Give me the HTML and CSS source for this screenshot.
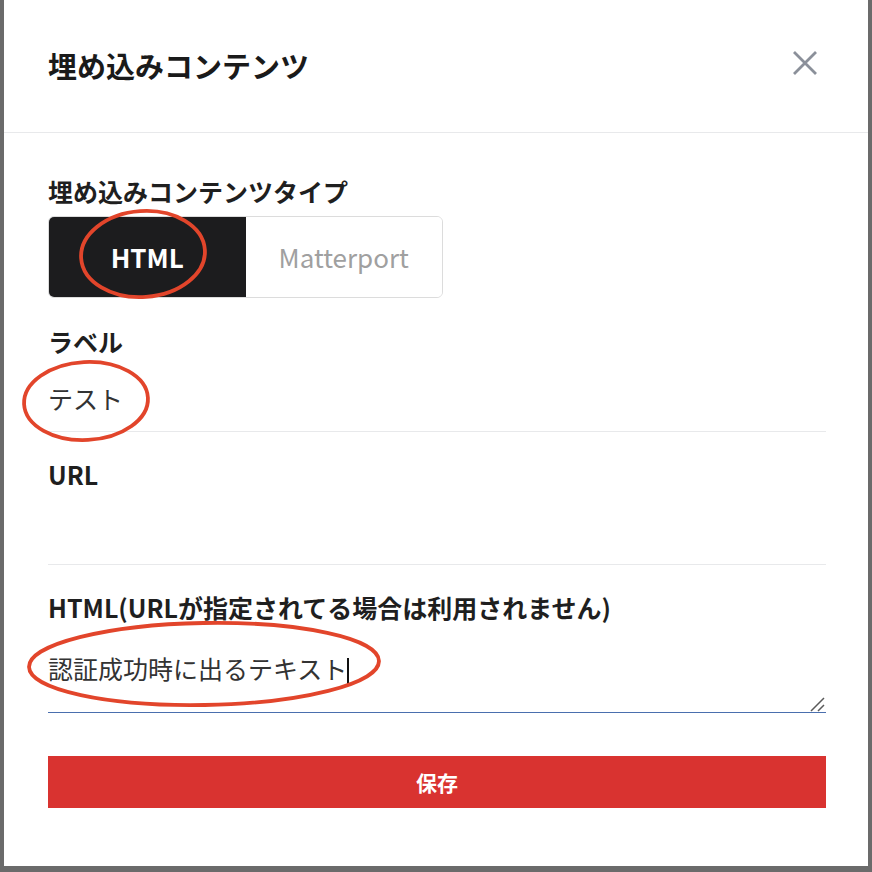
FILE: index.html
```html
<!DOCTYPE html>
<html lang="ja">
<head>
<meta charset="utf-8">
<title>埋め込みコンテンツ</title>
<link rel="stylesheet" href="styles.css">
</head>
<body>
<div class="modal">
  <header class="modal-header">
    <h1 class="modal-title">埋め込みコンテンツ</h1>
    <button class="close-btn" aria-label="閉じる">
      <svg width="26" height="26" viewBox="0 0 26 26"><path d="M2 2 L24 24 M24 2 L2 24" stroke="#8b909a" stroke-width="2.8" stroke-linecap="butt" fill="none"/></svg>
    </button>
  </header>
  <div class="modal-body">
    <div class="field field-first">
      <div class="label">埋め込みコンテンツタイプ</div>
      <div class="toggle">
        <div class="seg seg-on">HTML</div>
        <div class="seg seg-off">Matterport</div>
      </div>
    </div>
    <div class="field field-after-toggle">
      <div class="label">ラベル</div>
      <input class="text-input" type="text" value="テスト">
    </div>
    <div class="field">
      <div class="label">URL</div>
      <input class="text-input" type="text" value="">
    </div>
    <div class="field">
      <div class="label">HTML(URLが指定されてる場合は利用されません)</div>
      <div class="ta-wrap">
        <textarea class="text-area">認証成功時に出るテキスト</textarea>
        <div class="ta-mirror" aria-hidden="true"><span class="ghost">認証成功時に出るテキスト</span><span class="caret"></span></div>
        <svg class="grip" width="16" height="16" viewBox="0 0 16 16" aria-hidden="true"><path d="M2 15 L15 2 M9 15 L15 9" stroke="#5a5a5a" stroke-width="1.5" fill="none"/></svg>
      </div>
    </div>
    <button class="save-btn">保存</button>
  </div>
  <svg class="marks" width="864" height="866" viewBox="0 0 864 866" aria-hidden="true">
    <ellipse cx="139" cy="254" rx="62" ry="43" transform="rotate(-4 139 254)"/>
    <ellipse cx="82" cy="401" rx="62" ry="39" transform="rotate(-3 82 401)"/>
    <ellipse cx="200" cy="664" rx="175" ry="41" transform="rotate(-1 200 664)"/>
  </svg>
</div>
</body>
</html>
```
FILE: styles.css
```css
* { box-sizing: border-box; }
html, body { margin: 0; padding: 0; }
body {
  background: #6b6b6b;
  font-family: "Noto Sans CJK JP", "Noto Sans", sans-serif;
  color: #1d1d1f;
}
.modal {
  position: relative;
  width: 864px;
  height: 866px;
  margin: 0 0 0 4px;
  background: #ffffff;
}
.modal-header {
  height: 133px;
  border-bottom: 1px solid #e8e9eb;
  display: flex;
  align-items: center;
  justify-content: space-between;
  padding: 0 50px 2px 44px;
}
.modal-title {
  margin: 0;
  font-size: 29px;
  font-weight: 700;
  line-height: 40px;
  color: #1a1a1a;
}
.close-btn {
  border: 0;
  background: none;
  padding: 0;
  width: 26px;
  height: 26px;
  display: flex;
  margin-bottom: 4px;
}
.modal-body {
  padding: 42px 42px 0 44px;
  display: flex;
  flex-direction: column;
}
.field { margin-top: 26px; display: flex; flex-direction: column; }
.field-first { margin-top: 0; }
.field-after-toggle { margin-top: 27px; }
.label {
  font-size: 25px;
  font-weight: 700;
  line-height: 32px;
  color: #1f1f1f;
}
.toggle {
  margin-top: 9px;
  width: 395px;
  height: 82px;
  display: flex;
  border: 1px solid #dcdcdc;
  border-radius: 6px;
  overflow: hidden;
}
.seg {
  flex: 1;
  display: flex;
  align-items: center;
  justify-content: center;
  font-size: 26px;
}
.seg-on {
  background: #1c1c1e;
  color: #ffffff;
  font-weight: 700;
  padding-bottom: 2px;
}
.seg-off {
  background: #ffffff;
  color: #a0a0a0;
  font-weight: 400;
  padding-bottom: 2px;
}
.text-input {
  display: block;
  width: 100%;
  height: 75px;
  padding: 8px 0 0 0;
  border: 0;
  border-bottom: 1px solid #e8e9eb;
  font-family: inherit;
  font-size: 25px;
  color: #333333;
  background: transparent;
  outline: none;
}
.ta-wrap { position: relative; }
.text-area, .ta-mirror {
  font-family: inherit;
  font-size: 25px;
  line-height: 36px;
  padding: 27px 0 0 0;
}
.text-area {
  display: block;
  width: 100%;
  height: 90px;
  border: 0;
  border-bottom: 1px solid #4a6fae;
  color: #333333;
  background: transparent;
  outline: none;
  resize: none;
  overflow: hidden;
}
.ta-mirror {
  position: absolute;
  left: 0;
  top: 0;
  pointer-events: none;
  white-space: pre;
}
.ghost { color: transparent; }
.caret {
  display: inline-block;
  width: 1.5px;
  height: 28px;
  background: #111;
  vertical-align: -7px;
}
.grip {
  position: absolute;
  right: 1px;
  bottom: 1px;
  pointer-events: none;
}
.save-btn {
  margin-top: 43px;
  height: 52px;
  width: 100%;
  border: 0;
  background: #d93330;
  color: #ffffff;
  font-family: inherit;
  font-size: 21px;
  font-weight: 700;
}
.marks {
  position: absolute;
  left: 0;
  top: 0;
  pointer-events: none;
}
.marks ellipse {
  fill: none;
  stroke: #e2452b;
  stroke-width: 3.8;
}
```
